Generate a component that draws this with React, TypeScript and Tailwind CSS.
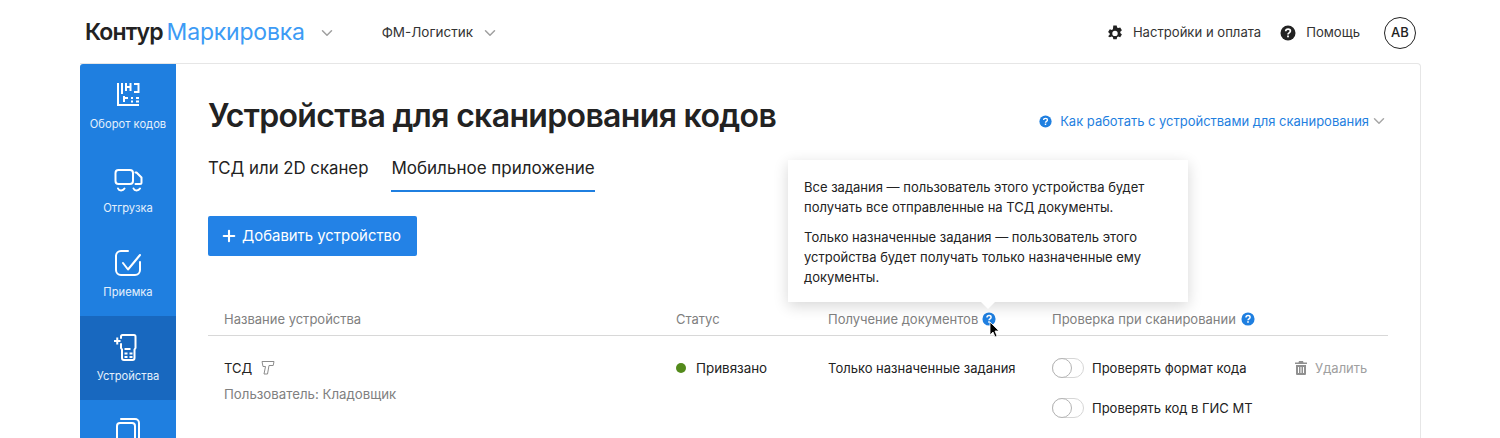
import React from "react";
import { ChevronDown, Plus } from "lucide-react";

const Help = ({ className = "" }: { className?: string }) => (
  <svg viewBox="0 0 16 16" className={className} fill="none">
    <circle cx="8" cy="8" r="7.500" fill="currentColor" />
    <path d="M5.700 6.300c0-1.300 1-2.200 2.400-2.200 1.300 0 2.300.8 2.300 2 0 1.800-2.400 1.700-2.400 3.400" stroke="#fff" strokeWidth="1.700" />
    <rect x="7.100" y="10.500" width="1.800" height="1.800" fill="#fff" />
  </svg>
);

const Gear = () => (
  <svg viewBox="0 0 16 16" className="w-[16px] h-[16px] text-[#222]" fill="currentColor">
    <path fillRule="evenodd" d="M6.300 0h3.400l.4 2.100 1.100.6 2-.7 1.700 2.900-1.600 1.400v1.300l1.600 1.400-1.700 2.900-2-.7-1.100.6-.4 2.100H6.300l-.4-2.100-1.100-.6-2 .7L1.100 10.800l1.600-1.400V8.100L1.100 6.700 2.800 3.800l2 .7 1.100-.6zM8 5.300a2.700 2.700 0 1 0 0 5.400 2.700 2.700 0 0 0 0-5.400z" transform="translate(0 .4)" />
  </svg>
);

const NavItem = ({ label, active, children }: { label?: string; active?: boolean; children: React.ReactNode }) => (
  <div className={`h-[84px] shrink-0 flex flex-col items-center pt-[15px] ${active ? "bg-[#1868bf]" : ""}`}>
    <div className="w-[32px] h-[32px] flex items-center justify-center">{children}</div>
    {label ? <div className="mt-[5px] text-[11.200px] leading-[16px] text-[#e4f0fc]">{label}</div> : null}
  </div>
);

const s = { fill: "none", stroke: "#fff", strokeWidth: 2, strokeLinecap: "round", strokeLinejoin: "round" } as const;

const Toggle = () => (
  <div className="w-[32px] h-[20px] rounded-full border border-[#d6d6d6] bg-white relative shrink-0">
    <div className="absolute -left-px -top-px w-[20px] h-[20px] rounded-full bg-white border border-[#b4b4b4]" />
  </div>
);

export default function App() {
  return (
    <div className="w-[1500px] h-[438px] overflow-hidden bg-white text-[#222] relative font-['Inter',sans-serif]">
      <header className="h-[63px] pt-[2px] flex items-center pl-[85px] pr-[84px]">
        <span className="text-[23px] font-semibold tracking-[-0.900px] text-[#222]">Контур</span>
        <span className="ml-[4px] text-[23px] tracking-[-0.200px] text-[#3d9bf5]">Маркировка</span>
        <ChevronDown className="ml-[13px] w-[18px] h-[18px] text-[#a0a0a0]" strokeWidth={2} />
        <span className="ml-[46px] text-[13.500px] text-[#333]">ФМ-Логистик</span>
        <ChevronDown className="ml-[8px] w-[18px] h-[18px] text-[#a0a0a0]" strokeWidth={2} />
        <div className="ml-auto flex items-center">
          <Gear />
          <span className="ml-[10px] text-[13.100px] text-[#333]">Настройки и оплата</span>
          <Help className="ml-[19px] w-[16px] h-[16px] text-[#222]" />
          <span className="ml-[10px] text-[13.100px] text-[#333]">Помощь</span>
          <div className="ml-[24px] w-[32px] h-[32px] rounded-full border-[1.500px] border-[#222] flex items-center justify-center text-[13px] font-medium">AB</div>
        </div>
      </header>

      <div className="ml-[80px] w-[1341px] h-[420px] flex border-t border-r border-[#e6e6e6] rounded-tr-[4px] overflow-hidden">
        <aside className="w-[96px] shrink-0 bg-[#1f7fe0] flex flex-col rounded-tl-[3px]">
          <NavItem label="Оборот кодов">
            <svg width="24" height="24" viewBox="0 0 24 24" {...s} strokeLinecap="butt" strokeLinejoin="miter">
              <path d="M2 0V22H23" />
              <path d="M6 0V11M10 0V8M14.500 0V8M10 4H14.500M18 1H22.500V9H18" />
              <path d="M7 15H12M8 13V19M15 15H17M20 15H23M15 18.500H17M20 18.500H23" />
            </svg>
          </NavItem>
          <NavItem label="Отгрузка">
            <svg width="30" height="26" viewBox="0 0 30 26" {...s}>
              <rect x="2.500" y="4" width="17.500" height="14" rx="3" />
              <path d="M22.500 6.500h1l5 5v5a1.500 1.500 0 0 1-1.500 1.500h-4.500" />
              <path d="M5 22.500c1 2.500 5 2.500 6.500 0M20.500 22.500c1 2.500 5 2.500 6.500 0" />
            </svg>
          </NavItem>
          <NavItem label="Приемка">
            <svg width="28" height="30" viewBox="0 0 28 30" {...s}>
              <path d="M14 3H7a5 5 0 0 0-5 5v14a5 5 0 0 0 5 5h14a5 5 0 0 0 5-5V14" />
              <path d="M9 15l5 6.500L26 7" />
            </svg>
          </NavItem>
          <NavItem label="Устройства" active>
            <svg width="28" height="30" viewBox="0 0 28 30" {...s}>
              <path d="M7 6V4.500A1.500 1.500 0 0 1 8.500 3H20a1.500 1.500 0 0 1 1.500 1.500V16l-1 1.500V26a2 2 0 0 1-2 2H10a2 2 0 0 1-2-2V17.500l-1-1.500V12" />
              <path d="M0 9h6.500M3.250 5.500v7" strokeLinecap="butt" />
              <path d="M10.500 17h6M10.500 21.500h3M15.500 21.500h3M10.500 25h3M15.500 25h3" strokeLinecap="butt" />
            </svg>
          </NavItem>
          <NavItem>
            <svg width="26" height="28" viewBox="0 0 26 28" {...s}>
              <rect x="2" y="6" width="18" height="22" rx="3" />
              <path d="M6 2h14a4 4 0 0 1 4 4v18" />
            </svg>
          </NavItem>
        </aside>

        <main className="flex-1 min-w-0 pl-[32px] pr-[32px] relative">
          <div className="flex items-start justify-between pt-[32px]">
            <h1 className="text-[32px] leading-[40px] font-semibold tracking-[-0.660px] text-[#222]">Устройства для сканирования кодов</h1>
            <div className="mt-[15px] flex items-center text-[13px] leading-[20px] tracking-[-0.020px] text-[#1f7fe0]">
              <Help className="w-[13px] h-[13px] text-[#1f7fe0]" />
              <span className="ml-[8px]">Как работать с устройствами для сканирования</span>
              <ChevronDown className="ml-px w-[18px] h-[18px] text-[#a8a8a8]" strokeWidth={2} />
            </div>
          </div>

          <div className="mt-[16px] flex leading-[24px] text-[#222]">
            <div className="h-[40px] pt-[4px] text-[16.800px]">ТСД или 2D сканер</div>
            <div className="ml-[23px] h-[40px] pt-[4px] text-[17px] border-b-2 border-[#1f7fe0]">Мобильное приложение</div>
          </div>

          <button className="mt-[24px] h-[40px] w-[209px] pr-[4px] rounded-[2px] bg-[#2382e6] text-white text-[14.900px] flex items-center justify-center gap-[4px]">
            <Plus className="w-[18px] h-[18px]" strokeWidth={2.800} />
            Добавить устройство
          </button>

          <div className="mt-[53px] h-[27px] grid grid-cols-[452px_152px_224px_1fr] px-[16px] border-b border-[#d8d8d8] text-[13px] leading-[20px] text-[#808080]">
            <div>Название устройства</div>
            <div>Статус</div>
            <div className="flex items-center h-[20px]">Получение документов<Help className="ml-[4px] w-[14px] h-[14px] text-[#1f7fe0]" /></div>
            <div className="flex items-center h-[20px]">Проверка при сканировании<Help className="ml-[5px] w-[14px] h-[14px] text-[#1f7fe0]" /></div>
          </div>

          <div className="grid grid-cols-[452px_152px_224px_1fr] px-[16px] pt-[22px] text-[13px] leading-[20px]">
            <div>
              <div className="flex items-center">ТСД
                <svg className="ml-[9px]" width="14" height="14" viewBox="0 0 14 14" fill="none" stroke="#8c8c8c" strokeWidth="1">
                  <path d="M1 .5H13L12.200 4.500H8L6.500 13H3L4.500 5.500H2Z" />
                </svg>
              </div>
              <div className="mt-[6px] text-[13.250px] text-[#808080]">Пользователь: Кладовщик</div>
            </div>
            <div className="flex items-start text-[13.400px]">
              <span className="w-[10px] h-[10px] rounded-full bg-[#538a1b] mt-[5px]" />
              <span className="ml-[10px]">Привязано</span>
            </div>
            <div className="whitespace-nowrap">Только назначенные задания</div>
            <div className="flex whitespace-nowrap">
              <div className="flex flex-col gap-[20px] w-[195px]">
                <div className="flex items-center gap-[8px]"><Toggle />Проверять формат кода</div>
                <div className="flex items-center gap-[8px]"><Toggle />Проверять код в ГИС МТ</div>
              </div>
              <div className="ml-[48px] flex items-start h-[20px] text-[#a0a0a0]">
                <svg className="mt-[3px]" width="12" height="14" viewBox="0 0 12 14" fill="#909090">
                  <path d="M4 0h4l.500 1.500H12V3H0V1.500h3.500zM1 4h10v9a1 1 0 0 1-1 1H2a1 1 0 0 1-1-1zm2 2v6h1V6zm2.500 0v6h1V6zM8 6v6h1V6z" />
                </svg>
                <span className="ml-[8px]">Удалить</span>
              </div>
            </div>
          </div>
        </main>
      </div>

      {/* tooltip */}
      <div className="absolute left-[788px] top-[160px] w-[400px] h-[142px] bg-white shadow-[0_4px_14px_rgba(0,0,0,0.16)] px-[16px] pt-[17px] text-[13px] leading-[20px] text-[#222]">
        <p>Все задания — пользователь этого устройства будет получать все отправленные на ТСД документы.</p>
        <p className="mt-[10px]">Только назначенные задания — пользователь этого устройства будет получать только назначенные ему документы.</p>
        <div className="absolute left-[193px] -bottom-[7px] w-0 h-0 border-l-[7px] border-r-[7px] border-t-[7px] border-l-transparent border-r-transparent border-t-white" />
      </div>

      {/* cursor */}
      <svg className="absolute left-[989px] top-[321px]" width="12" height="18" viewBox="0 0 12 18">
        <path d="M1 1v13l3-3 2 5 2-1-2-5h4z" fill="#000" stroke="#fff" strokeWidth="0.800" />
      </svg>
    </div>
  );
}
